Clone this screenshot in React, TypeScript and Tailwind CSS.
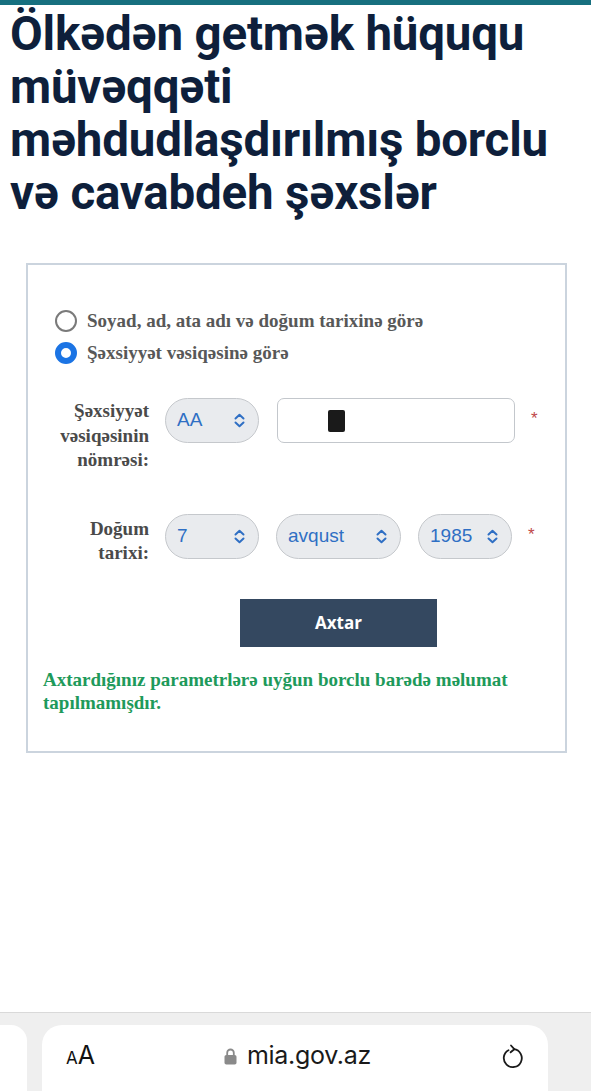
import React from 'react';

const serif = { fontFamily: '"Liberation Serif", "Times New Roman", serif' };

const UpDown = () => (
  <svg width="13" height="15" viewBox="0 0 13 15" fill="none" stroke="#2f6fc4" strokeWidth="2" strokeLinecap="round" strokeLinejoin="round">
    <path d="M2.5 5.5 L6.5 1.8 L10.5 5.5" />
    <path d="M2.5 9.5 L6.5 13.2 L10.5 9.5" />
  </svg>
);

const Pill = ({ value, width }: { value: string; width: string }) => (
  <div className={`${width} h-[45px] shrink-0 rounded-full bg-[#e9ebee] border-[1.5px] border-[#c5c8cc] flex items-center justify-between pl-[11px] pr-[12px]`}>
    <span className="text-[19px] text-[#2f6fc4] font-['Liberation_Sans',Arial,sans-serif]">{value}</span>
    <UpDown />
  </div>
);

const Star = () => (
  <span className="text-[17px] text-[#c0474a] leading-none mt-[12px] font-['Liberation_Sans',Arial,sans-serif]">*</span>
);

export default function App() {
  return (
    <div className="w-[591px] h-[1091px] flex flex-col bg-white overflow-hidden">
      <div className="h-[5px] bg-[#17707f] shrink-0" />

      {/* Title */}
      <h1 className="px-[10px] pt-[3px] font-['Roboto',sans-serif] font-bold text-[47.5px] leading-[53px] text-[#0e1f3b] tracking-[-0.2px]">
        Ölkədən getmək hüququ müvəqqəti məhdudlaşdırılmış borclu və cavabdeh şəxslər
      </h1>

      {/* Search card */}
      <div className="mt-[43px] ml-[26px] w-[541px] border-2 border-[#cbd4de] pt-[40px] pb-[37px]" style={serif}>
        <div className="pl-[27px] flex flex-col">
          <label className="h-[32px] flex items-center gap-[10px]">
            <span className="w-[22px] h-[22px] rounded-full border-2 border-[#7a7a7a] bg-white" />
            <span className="font-bold text-[19px] text-[#585858]">Soyad, ad, ata adı və doğum tarixinə görə</span>
          </label>
          <label className="h-[32px] flex items-center gap-[10px]">
            <span className="w-[22px] h-[22px] rounded-full border-[6px] border-[#1b74e4] bg-white" />
            <span className="font-bold text-[19px] text-[#585858]">Şəxsiyyət vəsiqəsinə görə</span>
          </label>
        </div>

        <div className="mt-[29px] pl-[22px] flex items-start gap-[16px]">
          <div className="w-[99px] pt-[1px] text-right font-bold text-[19px] leading-[24.5px] text-[#4a4a4a]">
            Şəxsiyyət vəsiqəsinin nömrəsi:
          </div>
          <Pill value="AA" width="w-[94px]" />
          <div className="ml-[2px] w-[238px] h-[45px] rounded-[7px] border-[1.5px] border-[#c3c7cc] bg-white flex items-center pl-[50px]">
            <span className="w-[17px] h-[22px] bg-[#1a1a1a] rounded-[2px]" />
          </div>
          <Star />
        </div>

        <div className="mt-[41px] pl-[22px] flex items-start gap-[16px]">
          <div className="w-[99px] pt-[3px] text-right font-bold text-[19px] leading-[24.5px] text-[#4a4a4a]">
            Doğum tarixi:
          </div>
          <div className="flex items-center gap-[17px]">
            <Pill value="7" width="w-[94px]" />
            <Pill value="avqust" width="w-[125px]" />
            <Pill value="1985" width="w-[94px]" />
          </div>
          <Star />
        </div>

        <div className="mt-[33px] pl-[137px] w-[484px] flex justify-center">
          <button className="w-[197px] h-[48px] bg-[#344860] text-white text-[17px] font-bold font-['Open_Sans',sans-serif]">
            Axtar
          </button>
        </div>

        <p className="mt-[21px] px-[15px] font-bold text-[19px] leading-[23px] text-[#1e9a5b]">
          Axtardığınız parametrlərə uyğun borclu barədə məlumat tapılmamışdır.
        </p>
      </div>

      <div className="flex-1" />

      {/* Safari bottom bar */}
      <div className="h-[79px] shrink-0 border-t border-[#d9d9d9] bg-[#efefef] flex items-end gap-[15px] font-['Inter',sans-serif]">
        <div className="w-[27px] h-[66px] bg-white rounded-tr-[16px]" />
        <div className="w-[506px] h-[66px] bg-white rounded-t-[20px] flex items-center justify-between px-[24px] pb-[4px]">
          <span className="text-[#111] flex items-baseline">
            <span className="text-[17px]">A</span>
            <span className="text-[25px]">A</span>
          </span>
          <span className="flex items-center gap-[10px]">
            <svg width="13" height="17" viewBox="0 0 13 17">
              <path d="M3.2 7 V4.8 a3.3 3.3 0 0 1 6.6 0 V7" fill="none" stroke="#8a8a8a" strokeWidth="1.8" />
              <rect x="0.5" y="7" width="12" height="9.5" rx="1.8" fill="#8a8a8a" />
            </svg>
            <span className="text-[25px] text-[#1a1a1a] tracking-[-0.3px]">mia.gov.az</span>
          </span>
          <svg width="24" height="28" viewBox="0 0 24 28" fill="none" stroke="#1a1a1a" strokeWidth="1.8" strokeLinecap="round" strokeLinejoin="round">
            <path d="M8.5 8.2 A9 9 0 1 0 14 7.2" />
            <path d="M11 3.5 L14.3 7.2 L10.6 10.3" />
          </svg>
        </div>
      </div>
    </div>
  );
}
